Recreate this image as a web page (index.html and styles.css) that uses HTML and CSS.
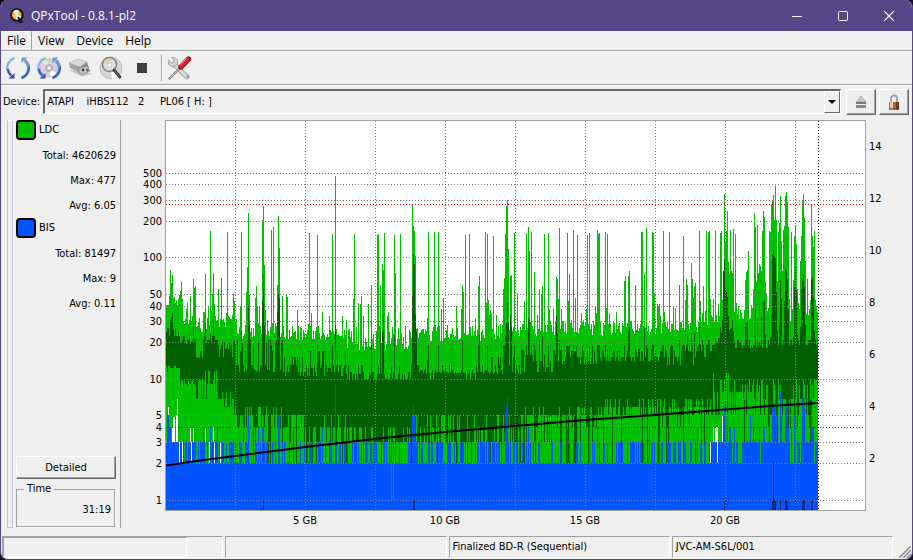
FILE: index.html
```
<!DOCTYPE html>
<html lang="en">
<head>
    <meta charset="UTF-8">
    <meta name="viewport" content="width=device-width, initial-scale=1.0">
    <title>QPxTool - 0.8.1-pl2</title>
    <link rel="stylesheet" href="styles.css">
</head>
<body>
<div class="window">
    <header class="titlebar">
        <svg class="logo" viewBox="0 0 14 16" width="14" height="16" aria-hidden="true">
            <circle cx="7" cy="7" r="6.8" fill="#111"/>
            <path d="M7 9l4 0 2 6-4 0z" fill="#111"/>
            <circle cx="6.7" cy="6.8" r="4.8" fill="#f6b24c"/>
            <path d="M6.7 6.8L3 3.6A4.8 4.8 0 0 1 9 2.6z" fill="#fff3c8"/>
            <path d="M6.7 6.8l4.6 1.5A4.8 4.8 0 0 1 6 11.5z" fill="#fff"/>
            <circle cx="6.7" cy="6.8" r="1.8" fill="#fff"/>
            <path d="M8 9l3 4.5" stroke="#111" stroke-width="2"/>
        </svg>
        <span class="title">QPxTool - 0.8.1-pl2</span>
        <button class="win-btn" aria-label="Minimize"><svg width="10" height="10"><path d="M0 5.5h10" stroke="#fff"/></svg></button>
        <button class="win-btn" aria-label="Maximize"><svg width="10" height="10"><rect x=".5" y=".5" width="9" height="9" rx="1" fill="none" stroke="#fff"/></svg></button>
        <button class="win-btn" aria-label="Close"><svg width="10" height="10"><path d="M0 0l10 10M10 0L0 10" stroke="#fff" stroke-width="1.1"/></svg></button>
    </header>

    <nav class="menubar">
        <button class="menu active">File</button>
        <button class="menu">View</button>
        <button class="menu">Device</button>
        <button class="menu">Help</button>
    </nav>

    <div class="toolbar">
        <button class="tool" aria-label="Rescan bus">
            <svg viewBox="0 0 24 24" width="24" height="24" fill="none">
                <path d="M8.500 2C3 4 .5 9 1.500 14c.6 2.500 1.800 4.200 3.500 5.500" stroke="#86aee3" stroke-width="2.200"/>
                <path d="M1.700 13c.6 3 1.800 5 3.600 6.500" stroke="#3464bd" stroke-width="2.600"/>
                <path d="M8.500 17v5.500H2.500z" fill="#2d55b0"/>
                <path d="M15.500 22c5.500-2 8-7 7-12-.6-2.500-1.800-4.200-3.500-5.500" stroke="#3464bd" stroke-width="2.600"/>
                <path d="M22.300 11c-.6-3-1.800-5-3.600-6.500" stroke="#6c98da" stroke-width="2.600"/>
                <path d="M15.500 7V1.500h6z" fill="#6c98da"/>
            </svg>
        </button>
        <button class="tool" aria-label="Rescan media">
            <svg viewBox="0 0 24 24" width="24" height="24" fill="none">
                <circle cx="12" cy="12" r="9" fill="#d2d2d2" stroke="#aaa" stroke-width=".6"/>
                <path d="M12 12L5 6.500A9 9 0 0 1 10 3.200z" fill="#d9efc9"/>
                <path d="M12 12l7 5.500a9 9 0 0 1-5 3.300z" fill="#fff"/>
                <path d="M12 12l-9-1a9 9 0 0 1 2-4.500z" fill="#f1c9e6"/>
                <circle cx="12" cy="12" r="3.600" fill="#bbb" stroke="#999" stroke-width=".5"/>
                <circle cx="12" cy="12" r="1.600" fill="#f8f8f8"/>
                <path d="M8.500 2C3 4 .5 9 1.500 14c.6 2.500 1.800 4.200 3.500 5.500" stroke="#86aee3" stroke-width="2.200"/>
                <path d="M1.700 13c.6 3 1.800 5 3.600 6.500" stroke="#3464bd" stroke-width="2.600"/>
                <path d="M8.500 17v5.500H2.500z" fill="#2d55b0"/>
                <path d="M15.500 22c5.500-2 8-7 7-12-.6-2.500-1.800-4.200-3.500-5.500" stroke="#3464bd" stroke-width="2.600"/>
                <path d="M22.300 11c-.6-3-1.800-5-3.600-6.500" stroke="#6c98da" stroke-width="2.600"/>
                <path d="M15.500 7V1.500h6z" fill="#6c98da"/>
            </svg>
        </button>
        <button class="tool" aria-label="Device info">
            <svg viewBox="0 0 24 24" width="24" height="24">
                <path d="M1 14l12 6 11-2-9-4z" fill="#c4c4c4"/>
                <path d="M1 7l9-4 9 3-7 5z" fill="#d8dade" stroke="#999" stroke-width=".5"/>
                <path d="M1 7l11 4v6L2 12z" fill="#a4a6aa"/>
                <path d="M12 11l7-5 2 6-7 5z" fill="#898b90"/>
                <path d="M11 12l8-2 3 5-8 4-3-2z" fill="#bfc1c5" stroke="#777" stroke-width=".6"/>
                <circle cx="15" cy="14" r="1.400" fill="#444"/>
                <path d="M18 12l3 2-2 2z" fill="#555"/>
            </svg>
        </button>
        <button class="tool" aria-label="Scan">
            <svg viewBox="0 0 24 24" width="24" height="24">
                <circle cx="12" cy="12" r="11" fill="#d5d5d5" stroke="#b4b4b4" stroke-width=".7"/>
                <path d="M12 12l8 7a11 11 0 0 1-7 4z" fill="#fff"/>
                <circle cx="10.500" cy="8.500" r="7" fill="#dedede" stroke="#858585" stroke-width="1.600"/>
                <path d="M10.500 9L5 6a6 6 0 0 1 4-3z" fill="#f0c4b8"/>
                <path d="M10.500 9L9 3a6 6 0 0 1 4 0z" fill="#cfe3a8"/>
                <circle cx="10.500" cy="9" r="2.200" fill="#f7f7f7" stroke="#aaa" stroke-width=".5"/>
                <path d="M15 14l6 7" stroke="#333" stroke-width="2.800" stroke-linecap="round"/>
                <path d="M15.500 14.500l5 6" stroke="#888" stroke-width=".8"/>
            </svg>
        </button>
        <button class="tool" aria-label="Stop">
            <svg viewBox="0 0 24 24" width="24" height="24"><rect x="7" y="7" width="10" height="10" fill="#404040"/></svg>
        </button>
        <span class="separator"></span>
        <button class="tool" aria-label="Preferences">
            <svg viewBox="0 0 24 24" width="24" height="24" fill="none" stroke-linecap="round">
                <path d="M7 8l13 13" stroke="#8d8d8d" stroke-width="4.600"/>
                <path d="M7 8l13 13" stroke="#dcdcdc" stroke-width="3.200"/>
                <path d="M1.500 4.500c-1 4 2 7 6 6l3-3c1-4-2-6.500-5.500-6l2.500 3.500-2.500 2z" fill="#d6d6d6" stroke="#909090" stroke-width=".8"/>
                <circle cx="20.500" cy="20.500" r="1" fill="#777"/>
                <path d="M12 13l-9.500 9.500" stroke="#777" stroke-width="2.200"/>
                <path d="M12 13l-9 9" stroke="#ccc"/>
                <path d="M14 11l7.500-8" stroke="#9e0c12" stroke-width="5.400"/>
                <path d="M14 10.500l7-7.500" stroke="#d8242a" stroke-width="3.400"/>
                <path d="M14 8.500l5-5.500" stroke="#f58a8c"/>
            </svg>
        </button>
    </div>

    <div class="device-row">
        <label for="device">Device:</label>
        <div class="combo">
            <select id="device">
                <option>ATAPI &nbsp;&nbsp; iHBS112 &nbsp; 2 &nbsp; &nbsp; PL06 [ H: ]</option>
            </select>
            <span class="combo-arrow"></span>
        </div>
        <button class="push icon-btn" aria-label="Eject">
            <svg viewBox="0 0 12 14" width="12" height="14">
                <path d="M6 1l5 6H1z" fill="#c6c6c6" stroke="#999" stroke-width=".6"/>
                <rect x="1" y="7" width="10" height="2" fill="#777"/>
                <rect x="1" y="10" width="10" height="3" fill="#888"/>
                <path d="M1 9.500h10" stroke="#eee"/>
            </svg>
        </button>
        <button class="push icon-btn" aria-label="Lock tray">
            <svg viewBox="0 0 12 16" width="12" height="16">
                <path d="M3 9V4.500a3 3 0 0 1 6 0V9" fill="none" stroke="#9b9b9b" stroke-width="1.800"/>
                <rect x="1" y="8" width="10" height="7.500" rx=".8" fill="#a8694c"/>
                <rect x="2" y="8" width="3" height="7.500" fill="#f0c8a4"/>
                <rect x="8" y="8" width="3" height="7.500" fill="#6d3524"/>
                <path d="M1 15h10" stroke="#5a2c1e"/>
            </svg>
        </button>
    </div>

    <main class="content">
        <div class="splitter"></div>
        <aside class="stats">
            <div class="series"><span class="swatch ldc"></span>LDC</div>
            <p>Total: 4620629</p>
            <p>Max: 477</p>
            <p>Avg: 6.05</p>
            <div class="series"><span class="swatch bis"></span>BIS</div>
            <p>Total: 81497</p>
            <p>Max: 9</p>
            <p>Avg: 0.11</p>
            <button class="push detailed">Detailed</button>
            <fieldset class="time">
                <legend>Time</legend>
                <output>31:19</output>
            </fieldset>
        </aside>
        <section class="chart">
            <div class="axis axis-left" id="axisErrors"></div>
            <svg class="plot" id="plot" viewBox="166 121 699 389" preserveAspectRatio="none" role="img" aria-label="LDC and BIS errors"></svg>
            <div class="axis axis-right" id="axisSpeed"></div>
            <div class="axis axis-bottom" id="axisSize"></div>
        </section>
    </main>

    <footer class="statusbar">
        <div class="pane pane-progress"><div class="progress"></div></div>
        <div class="pane"></div>
        <div class="pane">Finalized BD-R (Sequential)</div>
        <div class="pane">JVC-AM-S6L/001</div>
        <svg class="grip" width="12" height="12"><path d="M0 12L12 0M4 12l8-8M8 12l4-4" stroke="#8c8c8c" stroke-width="1.500"/></svg>
    </footer>
</div>
<script src="chart.js"></script>
</body>
</html>
```
FILE: styles.css
```
* {
    box-sizing: border-box;
}

body {
    margin: 0;
    height: 100vh;
    background: #16101f;
    font-family: "DejaVu Sans Condensed", "DejaVu Sans", sans-serif;
    font-size: 11px;
    line-height: 14px;
    color: #000;
}

button, select {
    font: inherit;
    color: inherit;
}

.window {
    display: flex;
    flex-direction: column;
    height: 100vh;
    border: 1px solid #554688;
    border-top: 0;
    border-radius: 8px;
    background: #efefef;
    overflow: hidden;
}

.titlebar {
    display: flex;
    align-items: center;
    flex: none;
    height: 31px;
    padding-left: 9px;
    background: #554688;
    color: #fff;
    font-family: "Open Sans", sans-serif;
    font-size: 12px;
}

.title {
    flex: 1;
    margin-left: 7px;
}

.win-btn {
    display: flex;
    align-items: center;
    justify-content: center;
    width: 46px;
    height: 31px;
    padding: 0;
    border: 0;
    background: none;
}

.menubar {
    display: flex;
    flex: none;
    height: 20px;
    border-bottom: 1px solid #a0a0a0;
    font-family: "Open Sans", sans-serif;
    font-size: 12px;
}

.menu {
    padding: 0 5px;
    border: 1px solid transparent;
    background: none;
    line-height: 17px;
}

.menu.active {
    border-color: #fff #a0a0a0 transparent #fff;
}

.toolbar {
    display: flex;
    align-items: center;
    flex: none;
    height: 34px;
    padding-left: 1px;
    border-top: 1px solid #fff;
    border-bottom: 1px solid #a0a0a0;
}

.tool {
    display: flex;
    align-items: center;
    justify-content: center;
    width: 31px;
    height: 30px;
    padding: 0;
    border: 0;
    background: none;
}

.separator {
    width: 2px;
    height: 26px;
    margin-left: 4px;
    border-left: 1px solid #a0a0a0;
    border-right: 1px solid #fff;
}

.device-row {
    display: flex;
    align-items: center;
    flex: none;
    gap: 3px;
    height: 32px;
    padding: 0 3px 0 2px;
    border-top: 1px solid #fff;
}

.combo {
    position: relative;
    flex: 1;
    height: 25px;
    margin-right: 2px;
}

.combo select {
    appearance: none;
    width: 100%;
    height: 100%;
    padding: 0 20px 0 2px;
    border: 2px solid #696969;
    border-right: 1px solid #fff;
    border-bottom: 1px solid #fff;
    border-radius: 0;
    background: #efefef;
}

.combo-arrow {
    position: absolute;
    top: 2px;
    right: 1px;
    bottom: 1px;
    width: 16px;
    border: 1px solid;
    border-color: #fff #696969 #696969 #fff;
    pointer-events: none;
}

.combo-arrow::after {
    content: "";
    position: absolute;
    top: 8px;
    left: 3px;
    border: 4px solid transparent;
    border-top-color: #000;
    border-bottom: 0;
}

.push {
    border: 1px solid;
    border-color: #fff #696969 #696969 #fff;
    background: #efefef;
    box-shadow: inset -1px -1px #a0a0a0;
}

.icon-btn {
    display: flex;
    align-items: center;
    justify-content: center;
    width: 30px;
    height: 26px;
    padding: 0;
}

.content {
    display: flex;
    flex: 1;
    min-height: 0;
    padding: 3px 0 8px 6px;
}

.splitter {
    width: 6px;
    border: 1px solid #c8c8c8;
    border-top-color: #fff;
}

.stats {
    display: flex;
    flex-direction: column;
    width: 108px;
    padding: 0 4px 0 3px;
    border-right: 1px solid #a0a0a0;
}

.stats p {
    height: 25px;
    margin: 0;
    line-height: 25px;
    text-align: right;
}

.series {
    display: flex;
    align-items: center;
    gap: 3px;
    height: 20px;
    margin-bottom: 3px;
    line-height: 16px;
}

.swatch {
    width: 20px;
    height: 20px;
    border: 2px solid #000;
    border-radius: 4px;
}

.ldc {
    background: #00c000;
}

.bis {
    background: #0055ff;
}

.detailed {
    height: 23px;
    margin-top: auto;
    padding: 0;
}

.time {
    height: 44px;
    margin: 4px 1px 1px 0;
    padding: 8px 3px 0;
    border: 1px solid #a0a0a0;
    box-shadow: 1px 1px #fff;
}

.time legend {
    margin-left: 4px;
    padding: 0 3px;
    line-height: 12px;
}

.time output {
    display: block;
    text-align: right;
}

.chart {
    display: grid;
    flex: 1;
    grid-template-columns: 44px 1fr 46px;
    grid-template-rows: 1fr 17px;
    min-width: 0;
}

.plot {
    display: block;
    width: 100%;
    height: 100%;
    min-height: 0;
    border: 1px solid #a0a0a0;
    background: #fff;
}

.axis {
    position: relative;
    line-height: 10px;
}

.axis span {
    position: absolute;
    white-space: nowrap;
}

.axis-left span {
    right: 3px;
    transform: translateY(-50%);
}

.axis-right span {
    left: 3px;
    transform: translateY(-50%);
}

.axis-bottom {
    grid-column: 2;
}

.axis-bottom span {
    top: 5px;
    transform: translateX(-50%);
}

.statusbar {
    display: grid;
    grid-template-columns: repeat(4, minmax(0, 1fr)) 16px;
    flex: none;
    gap: 2px;
    height: 23px;
    padding: 0 1px 1px;
}

.pane {
    padding: 0 3px;
    border: 1px solid;
    border-color: #a0a0a0 #fff #fff #a0a0a0;
    line-height: 20px;
    white-space: nowrap;
}

.pane-progress {
    padding: 0;
}

.progress {
    width: 184px;
    height: 20px;
    border: 1px solid;
    border-color: #a0a0a0 #fff #fff #a0a0a0;
}

.grip {
    align-self: end;
    justify-self: end;
}
```
FILE: chart.js
```
const LEFT = 166, TOP = 121, RIGHT = 865, BOTTOM = 510, END = 818;
const plot = document.getElementById('plot');

// y position of an error count on the log scale
const logY = v => Math.floor(500.5 - 121.3 * Math.log10(v));

// fixed-seed noise
let seed = 4620629;
function rnd() {
    seed = (seed * 1103515245 + 12345) % 2147483648;
    return seed / 2147483648;
}
const pick = list => list[Math.floor(rnd() * list.length)];

function parse(text) {
    const out = {};
    text.trim().split(/\s+/).forEach(item => {
        const [x, y] = item.split(':').map(Number);
        out[x] = y;
    });
    return out;
}

// peaks, column:top
const ldcPeaks = parse(`
166:305 167:305 168:305 169:296 170:270 171:283 172:275 173:298 174:297 175:303 176:300 178:299 179:295 180:291 181:282 182:299
187:303 190:296 193:279 194:288 195:286 205:274 208:307 210:231 211:311 212:294 213:273 214:304 218:289 221:278 227:232 233:294 234:301
240:306 241:232 246:292 247:267 248:213 249:295 255:298 256:286 257:306 259:306 262:220 263:206 264:265 265:310 271:230 273:227 277:285 278:216 279:248
282:296 286:295 287:297 297:310 309:233 311:313 317:235 322:312 329:316 332:234 335:176
342:316 346:320 353:299 354:234 358:303 360:304 361:296 363:316 368:304 371:285 377:235 378:234 380:285 382:264 383:270 384:233 387:316 388:312
394:235 395:273 400:234 412:205 413:226 414:231 415:256 427:318 428:232 434:232 438:232 441:309 443:298 456:306 461:309 462:285 463:292 465:235 469:234
475:318 478:286 479:276 485:232 486:303 487:234 488:300 489:315 490:310 491:313 493:236 496:315 503:289 504:278 505:234 506:206 507:200 508:249 510:276 511:275 514:233 517:293
524:301 526:233 528:227 529:251 531:232 534:272 537:315 539:289 541:294 542:286 544:234 548:233 549:310 553:308 556:277 557:279 558:299 559:228 561:309
567:233 568:301 569:274 573:230 575:298 577:235 581:313 586:309 587:235 589:233 595:306 596:313 597:230 598:234 599:233 605:232 606:308 607:234 609:313
616:312 624:281 625:276 628:276 629:271 635:285 641:232 642:232 644:274 646:228 652:232 653:233 654:293 657:304 658:306 659:304 660:316 663:231 664:312
669:232 673:306 675:308 679:285 683:236 685:300 686:279 687:285 691:263 692:279 693:298 694:286 695:283 699:231
700:301 703:286 706:231 708:232 709:231 710:299 713:299 715:231 718:304 720:233 721:231 722:300 723:271 724:194 725:242 726:231 727:211 728:262 729:274
730:230 731:271 732:273 733:229 735:234 736:303 738:306 744:310 745:280 746:272 747:270 748:251 751:305 752:308 753:289 754:213 755:227 756:282 757:225 758:273 759:264
760:266 761:271 762:231 763:211 764:217 765:282 766:293 768:308 769:231 770:232 771:204 772:201 773:195 774:220 775:186 776:220 777:281 778:232 779:223
780:196 781:241 782:271 783:230 784:226 785:196 786:192 787:202 788:227 789:299 791:232 792:309 793:280 794:236 795:225 796:244 797:289 798:303 799:309 800:261 801:236
802:201 803:194 804:218 805:261 807:279 810:300 811:204 812:236 813:247 814:231 815:300 816:306 817:312
`);
const darkPeaks = parse(`
170:321 171:317 172:313 173:329 193:327 205:323 210:333 213:321 241:331 248:306 249:325 262:301 263:275 264:325 277:312 278:294 279:298 335:325
380:331 382:331 383:315 394:335 412:296 413:255 414:264 415:315 416:331 427:360 462:340 479:335 505:335 506:323 507:303 508:322 510:315 511:327
528:318 529:320 539:340 542:335 556:316 557:333 559:340 628:331 629:327 644:327 679:340 687:333 691:333 694:333 699:327
720:327 721:333 722:320 723:271 724:259 725:288 726:292 727:297 728:316 729:330 730:329 731:328 732:320 733:331 745:327 746:323 747:321 755:310 757:318 761:318 763:302 764:300 765:335
770:337 771:315 772:254 773:250 774:257 775:257 776:292 777:331 779:325 780:280 781:299 784:301 785:268 786:271 787:279 788:309 793:337 794:287 795:267 796:290 797:335
800:327 801:289 802:281 803:275 804:287 805:325 811:280 812:278 813:298 814:331
`);
const bisPeaks = parse(`
167:415 168:407 169:427 170:427 172:427 203:427 210:427 217:427 247:442 248:415 258:427 262:427 263:406 278:415 279:415 293:427 322:427 335:384
412:415 413:406 414:415 431:427 506:406 505:415 507:398 528:427 567:427 589:427 597:427 649:427 697:427
723:415 724:406 725:415 727:415 729:427 730:427 734:427 750:415 753:427 759:427 763:415 764:427 772:407 773:407 774:407 775:391 776:415 780:391 781:415 785:406 786:406 787:406 788:427 791:427
794:415 795:407 802:398 803:398 804:407 811:406 812:427 813:427
`);

// [last column, LDC base, LDC jitter, dark tops, dark bottoms, share of BIS columns at 3]
const zones = [
    [179, 303, 6, [332, 328, 336], [372, 368, 366], .9],
    [195, 314, 10, [344, 340, 336, 342], [384, 381, 380, 386], .9],
    [202, 325, 8, [357, 351, 345, 358], [399, 399, 380], .7],
    [217, 319, 10, [340, 343, 336], [380, 384, 371, 392, 399], .8],
    [233, 322, 10, [342, 357, 349, 345], [399, 407, 399, 392], .6],
    [283, 329, 10, [343, 365, 370, 351, 340, 372], [427, 415, 415, 442, 407, 427], .55],
    [303, 333, 8, [365, 372, 357, 376], [415, 427, 415, 442], .12],
    [345, 332, 8, [372, 365, 376, 351, 368], [427, 427, 442, 442, 415], .35],
    [411, 338, 12, [374, 379, 365, 379, 372, 379], [427, 442, 427, 442, 442], .5],
    [480, 333, 8, [372, 365, 379, 373, 370], [442, 415, 442, 427, 442], .4],
    [520, 331, 8, [374, 370, 365, 357, 372], [442, 427, 415, 442], .55],
    [560, 328, 8, [361, 350, 367, 355, 372], [427, 415, 442, 415, 407], .3],
    [600, 328, 8, [361, 357, 364, 351, 346], [415, 407, 415, 427, 407], .25],
    [660, 328, 8, [361, 357, 351, 361, 349], [407, 407, 399, 415], .35],
    [699, 327, 6, [361, 357, 351, 365, 346], [407, 415, 399, 415, 427], .35],
    [712, 318, 9, [351, 357, 345, 340], [407, 399, 415], .6],
    [734, 316, 7, [345, 342, 338], [380, 373, 392, 415], .85],
    [767, 316, 6, [345, 342, 340, 348], [385, 392, 392, 399, 380, 415], .85],
    [817, 315, 8, [340, 343, 345, 340], [385, 399, 415, 427, 380], .85]
];

const d = { ldc: '', dark: '', bis: '', hole: '', navy: '' };
function bar(name, x, y1, y2, w = 1) {
    if (y2 > y1) d[name] += `M${x} ${y1}h${w}V${y2}h${-w}z`;
}

for (let x = LEFT; x < END; x++) {
    const [, base, jitter, tops, bottoms, share] = zones.find(z => x <= z[0]);
    const noise = Math.round(base + (rnd() * 2 - 1) * jitter);
    const ldc = ldcPeaks[x] || noise;
    let dark = pick(tops);
    if (!darkPeaks[x] && ldc < 290 && rnd() < .6) dark = Math.min(dark, 345);
    dark = darkPeaks[x] || dark;
    const level3 = rnd() < share;
    bar('ldc', x, ldc, BOTTOM);
    bar('dark', x, Math.max(dark, ldc), pick(bottoms));
    // a few columns stay dark down to the BIS area
    if (x > 240 && rnd() < .08) bar('dark', x, 400, 463);
    bar('bis', x, bisPeaks[x] || (level3 ? 442 : 463), BOTTOM);
}

// columns without samples
[[168, 407, 415], [172, 427, 442], [173, 417, 442], [174, 417, 442], [176, 415, 442], [177, 399, 442], [179, 442, 463], [182, 442, 463],
 [190, 427, 442], [191, 442, 463], [193, 427, 442], [205, 427, 442], [209, 442, 463], [213, 427, 442], [214, 442, 463], [220, 442, 463],
 [710, 442, 463], [713, 427, 442], [715, 427, 442], [716, 427, 442], [717, 427, 463], [722, 416, 442]].forEach(h => bar('hole', ...h));

[[263, 1], [413, 2], [724, 2], [772, 4], [780, 1], [785, 3], [795, 1], [802, 3], [811, 2]].forEach(([x, w]) => bar('navy', x, 500, BOTTOM, w));
bar('navy', 773, 463, 500);

const shape = (path, color) => `<path d="${path}" fill="${color}" shape-rendering="crispEdges"/>`;
const dots = (path, color) => `<path d="${path}" fill="none" stroke="${color}" stroke-dasharray="1 2" shape-rendering="crispEdges"/>`;

let grid = '';
[1, 2, 3, 5, 10, 20, 30, 40, 50, 100, 200, 300, 400, 500].forEach(v => {
    grid += `M${LEFT} ${logY(v) + .5}H${RIGHT}`;
});
for (let x = 235; x < END; x += 70) grid += `M${x + .5} ${TOP}V${BOTTOM}`;

plot.innerHTML =
    shape(d.ldc, '#00c000') +
    shape(d.dark, '#006000') +
    shape(d.bis, '#0055ff') +
    shape(d.hole, '#ffffff') +
    shape(d.navy, '#002a80') +
    shape('M391 463h1v37h-1zM393 463h1v37h-1z', '#009a70') +
    dots(grid, '#808080') +
    dots(`M${LEFT} 204.5H${RIGHT}M${LEFT} 427.5H${RIGHT}`, '#d00000') +
    dots(`M${END + .5} ${TOP}V${BOTTOM}`, '#000') +
    '<path d="M166 465.500L200 460.500L235 456L270 451.500L305 447L340 443L375 439L413 435L445 432L480 429L515 426L550 423L585 420L655 415L700 411.500L725 409.500L770 406L818 403" fill="none" stroke="#000" stroke-width="2"/>';

function labels(id, items, side, place) {
    document.getElementById(id).innerHTML = items.map(v =>
        `<span style="${side}:${place(v).toFixed(2)}%">${id === 'axisSize' ? v + ' GB' : v}</span>`).join('');
}
const height = BOTTOM - TOP + 2;
labels('axisErrors', [500, 400, 300, 200, 100, 50, 40, 30, 20, 10, 5, 4, 3, 2, 1], 'top', v => (logY(v) + 2 - TOP) / height * 100);
labels('axisSpeed', [14, 12, 10, 8, 6, 4, 2], 'top', v => (512 - v * 26 - TOP) / height * 100);
labels('axisSize', [5, 10, 15, 20], 'left', v => v * 28 / 701 * 100);
```
